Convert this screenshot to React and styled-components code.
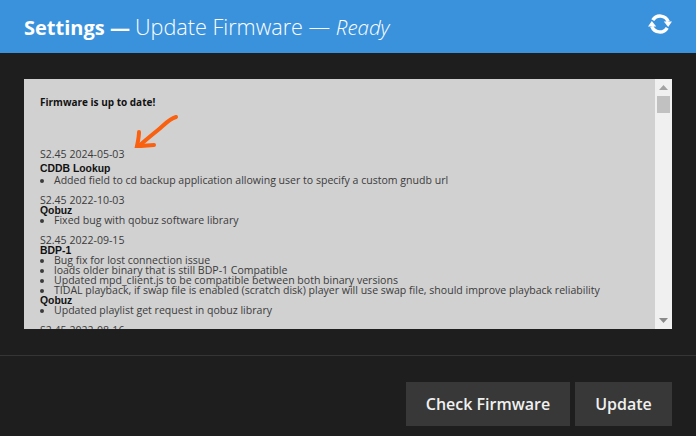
import React from "react";
import styled, { createGlobalStyle } from "styled-components";

const GlobalStyle = createGlobalStyle`
  html, body {
    margin: 0;
    padding: 0;
    background: #1e1e1e;
  }
  body {
    font-family: "Open Sans", sans-serif;
  }
`;

const Page = styled.div`
  width: 696px;
  height: 436px;
  display: flex;
  flex-direction: column;
  overflow: hidden;
  background: #1e1e1e;
`;

const Header = styled.header`
  height: 53px;
  flex-shrink: 0;
  display: flex;
  align-items: center;
  justify-content: space-between;
  padding: 0 24px;
  background: #3a92dd;
  color: #fff;
`;

const Title = styled.div`
  font-size: 20px;
  line-height: 53px;
  white-space: nowrap;
`;

const TitleStrong = styled.strong`
  font-weight: 700;
`;

const TitleLight = styled.span`
  font-size: 21.6px;
  font-weight: 300;
`;

const TitleStatus = styled.em`
  font-size: 20.5px;
  font-weight: 300;
  font-style: italic;
`;

const RefreshButton = styled.div`
  width: 24px;
  height: 24px;
  display: flex;
  margin-bottom: 5px;
`;

const Body = styled.main`
  flex: 1;
  padding: 26px 24px 26px;
`;

const Panel = styled.section`
  position: relative;
  height: 250px;
  display: flex;
  overflow: hidden;
  background: #d1d1d1;
`;

const Log = styled.div`
  flex: 1;
  padding: 16px 16px 0;
  overflow: hidden;
  color: #3b3b3b;
  font-size: 10.55px;
  line-height: 10px;
`;

const Status = styled.div`
  height: 14px;
  margin-bottom: 40px;
  font-size: 10px;
  line-height: 14px;
  font-weight: 700;
  color: #111;
`;

const Release = styled.div`
  margin-bottom: 10px;
`;

const ReleaseDate = styled.div`
  margin-bottom: ${(p) => (p.$first ? "4px" : "0")};
`;

const Feature = styled.div`
  margin-bottom: ${(p) => (p.$first ? "0" : "-2px")};
  font-family: "Liberation Sans", Arial, sans-serif;
  font-size: 10.4px;
  line-height: 12px;
  font-weight: 700;
  color: #111;
`;

const Changes = styled.ul`
  margin: 0;
  padding: 0 0 0 14px;
`;

const Scrollbar = styled.div`
  width: 17px;
  flex-shrink: 0;
  display: flex;
  flex-direction: column;
  align-items: center;
  background: #f0f0f0;
`;

const ScrollCap = styled.div`
  height: 17px;
  width: 17px;
  flex-shrink: 0;
  display: flex;
  align-items: center;
  justify-content: center;
`;

const ScrollTrack = styled.div`
  flex: 1;
  width: 100%;
`;

const ScrollThumb = styled.div`
  height: 17px;
  width: 13px;
  margin: 0 auto;
  background: #c1c1c1;
`;

const Arrow = styled.svg`
  position: absolute;
  left: 109px;
  top: 35px;
  width: 46px;
  height: 34px;
`;

const Footer = styled.footer`
  height: 81px;
  flex-shrink: 0;
  box-sizing: border-box;
  display: flex;
  justify-content: flex-end;
  gap: 5px;
  padding: 26px 24px 0;
  border-top: 1px solid #353535;
`;

const Button = styled.button`
  height: 44px;
  width: ${(p) => p.$width}px;
  padding: 0;
  border: 0;
  background: #383838;
  color: #f0f0f0;
  font-family: "Open Sans", sans-serif;
  font-size: 16px;
  font-weight: 600;
`;

function RefreshIcon() {
  return (
    <svg viewBox="0 0 24 24" width="24" height="24" fill="none">
      <path d="M4.8 8.2A8.6 8.6 0 0 1 20.2 9.6" stroke="#fff" strokeWidth="3.4" />
      <path d="M19.2 15.8A8.6 8.6 0 0 1 3.8 14.4" stroke="#fff" strokeWidth="3.4" />
      <path d="M15.8 9.4 L24 9.4 L20.2 15 Z" fill="#fff" />
      <path d="M8.2 14.6 L0 14.6 L3.8 9 Z" fill="#fff" />
    </svg>
  );
}

const releases = [
  {
    date: "S2.45 2024-05-03",
    first: true,
    groups: [
      {
        name: "CDDB Lookup",
        items: ["Added field to cd backup application allowing user to specify a custom gnudb url"],
      },
    ],
  },
  {
    date: "S2.45 2022-10-03",
    groups: [{ name: "Qobuz", items: ["Fixed bug with qobuz software library"] }],
  },
  {
    date: "S2.45 2022-09-15",
    groups: [
      {
        name: "BDP-1",
        items: [
          "Bug fix for lost connection issue",
          "loads older binary that is still BDP-1 Compatible",
          "Updated mpd_client.js to be compatible between both binary versions",
          "TIDAL playback, if swap file is enabled (scratch disk) player will use swap file, should improve playback reliability",
        ],
      },
      { name: "Qobuz", items: ["Updated playlist get request in qobuz library"] },
    ],
  },
  {
    date: "S2.45 2022-08-16",
    groups: [],
  },
];

export default function App() {
  return (
    <Page>
      <GlobalStyle />
      <Header>
        <Title>
          <TitleStrong>Settings — </TitleStrong>
          <TitleLight>Update Firmware — </TitleLight>
          <TitleStatus>Ready</TitleStatus>
        </Title>
        <RefreshButton>
          <RefreshIcon />
        </RefreshButton>
      </Header>
      <Body>
        <Panel>
          <Log>
            <Status>Firmware is up to date!</Status>
            {releases.map((release) => (
              <Release key={release.date}>
                <ReleaseDate $first={release.first}>{release.date}</ReleaseDate>
                {release.groups.map((group) => (
                  <div key={group.name}>
                    <Feature $first={release.first}>{group.name}</Feature>
                    <Changes>
                      {group.items.map((item) => (
                        <li key={item}>{item}</li>
                      ))}
                    </Changes>
                  </div>
                ))}
              </Release>
            ))}
          </Log>
          <Scrollbar>
            <ScrollCap>
              <svg width="9" height="5" viewBox="0 0 9 5">
                <path d="M0 5 L4.5 0 L9 5 Z" fill="#a3a3a3" />
              </svg>
            </ScrollCap>
            <ScrollTrack>
              <ScrollThumb />
            </ScrollTrack>
            <ScrollCap>
              <svg width="9" height="5" viewBox="0 0 9 5">
                <path d="M0 0 L4.5 5 L9 0 Z" fill="#8a8a8a" />
              </svg>
            </ScrollCap>
          </Scrollbar>
          <Arrow viewBox="0 0 46 34" fill="none">
            <path
              d="M43 3 C36 5 31 11 25 16 C20 20 14 25 7 31"
              stroke="#f9600f"
              strokeWidth="4"
              strokeLinecap="round"
            />
            <path
              d="M6 18 C6 23 5 27 4 32 C10 32 17 31 21 31"
              stroke="#f9600f"
              strokeWidth="4"
              strokeLinecap="round"
            />
          </Arrow>
        </Panel>
      </Body>
      <Footer>
        <Button $width={164}>Check Firmware</Button>
        <Button $width={97}>Update</Button>
      </Footer>
    </Page>
  );
}
